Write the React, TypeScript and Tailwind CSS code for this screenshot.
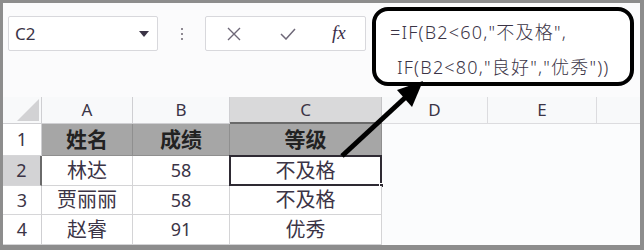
import React from 'react';

const ink = 'text-[#3b3446]';

const rows = [
  { n: '1', a: '姓名', b: '成绩', c: '等级', head: true },
  { n: '2', a: '林达', b: '58', c: '不及格' },
  { n: '3', a: '贾丽丽', b: '58', c: '不及格' },
  { n: '4', a: '赵睿', b: '91', c: '优秀' },
];

export default function App() {
  return (
    <div
      className="relative w-[644px] h-[250px] overflow-hidden bg-[#fbfbfc] border-[#8d8d8d] border-t-[3px] border-l-[3px] border-r-[4px] border-b-[5px]"
      style={{ fontFamily: '"Noto Sans", "Noto Sans CJK SC", sans-serif' }}
    >
      {/* Toolbar */}
      <div className="h-[94px] flex items-start pt-[13px] pl-[5px]">
        <div className="w-[150px] h-[35px] bg-white border border-[#d8d8dc] rounded-[2px] flex items-center justify-between pl-[6px] pr-[8px]">
          <span className={`text-[17px] ${ink}`}>C2</span>
          <svg width="10" height="6" viewBox="0 0 10 6">
            <path d="M0 0 L10 0 L5 6 Z" fill="#3b3446" />
          </svg>
        </div>
        <div className="w-[47px] h-[35px] flex flex-col items-center justify-center gap-[3px]">
          <span className="w-[2px] h-[2px] bg-[#6b6570] rounded-full" />
          <span className="w-[2px] h-[2px] bg-[#6b6570] rounded-full" />
          <span className="w-[2px] h-[2px] bg-[#6b6570] rounded-full" />
        </div>
        <div className="w-[161px] h-[35px] bg-white border border-[#d8d8dc] rounded-[2px] flex items-center pl-[21px]">
          <svg width="14" height="14" viewBox="0 0 14 14">
            <path d="M1 1 L13 13 M13 1 L1 13" stroke="#6e6878" strokeWidth="1.4" />
          </svg>
          <svg width="16" height="12" viewBox="0 0 16 12" className="ml-[39px]">
            <path d="M1 6 L6 11 L15 1" stroke="#6e6878" strokeWidth="1.5" fill="none" />
          </svg>
          <span
            className="ml-[36px] text-[19px] italic text-[#3b2f4a]"
            style={{ fontFamily: '"Liberation Serif", serif' }}
          >
            fx
          </span>
        </div>
      </div>

      {/* Grid */}
      <div className="grid grid-cols-[39px_91px_97px_152px_106px_109px_1fr] grid-rows-[27px_32px_30px_29px_30px] bg-white">
        {/* column headers */}
        <div className="relative bg-[#f8f9fa] border-b border-r border-[#cfcfd2]">
          <svg className="absolute right-[2px] bottom-[2px]" width="22" height="22" viewBox="0 0 22 22">
            <path d="M22 0 L22 22 L0 22 Z" fill="#d2d2d4" />
          </svg>
        </div>
        {['A', 'B'].map((l) => (
          <div key={l} className={`bg-[#f8f9fa] border-b border-r border-[#cfcfd2] flex items-center justify-center text-[17px] ${ink}`}>
            {l}
          </div>
        ))}
        <div className={`bg-[#d9d9da] border-b-2 border-b-[#6a6a6a] border-r border-r-[#c4c4c6] flex items-center justify-center text-[17px] ${ink}`}>
          C
        </div>
        {['D', 'E'].map((l) => (
          <div key={l} className={`bg-[#f8f9fa] border-b border-r border-[#dcdcdf] flex items-center justify-center text-[17px] ${ink}`}>
            {l}
          </div>
        ))}
        <div className="bg-[#f8f9fa] border-b border-[#dcdcdf]" />

        {rows.map((r) => (
          <React.Fragment key={r.n}>
            <div
              className={`flex items-center justify-center text-[18px] ${ink} border-b border-[#d6d6d8] ${
                r.n === '2' ? 'bg-[#d3d3d5] border-r-2 border-r-[#6a6a6a]' : 'bg-white border-r border-r-[#cfcfd2]'
              }`}
            >
              {r.n}
            </div>
            {[r.a, r.b].map((v, i) => (
              <div
                key={i}
                className={`flex items-center justify-center border-b border-r ${
                  r.head
                    ? 'bg-[#a6a6a6] border-[#8f8f8f] text-[21px] font-bold text-[#222]'
                    : `bg-white border-[#d4d4d6] ${/\d/.test(v) ? 'text-[18px]' : 'text-[20px]'} ${ink}`
                }`}
              >
                {v}
              </div>
            ))}
            <div
              className={`relative flex items-center justify-center border-b border-r ${
                r.head
                  ? 'bg-[#a6a6a6] border-[#8f8f8f] text-[21px] font-bold text-[#222]'
                  : `bg-white border-[#d4d4d6] text-[20px] ${ink}`
              }`}
            >
              {r.c}
              {r.n === '2' && (
                <>
                  <div className="absolute -left-px -top-px -right-px -bottom-px border-2 border-[#2e2a33]" />
                  <div className="absolute -right-[3px] -bottom-[3px] w-[5px] h-[5px] bg-[#2e2a33] border border-white" />
                </>
              )}
            </div>
            <div className="bg-[#fbfcfd]" />
            <div className="bg-[#fbfcfd]" />
            <div className="bg-[#fbfcfd]" />
          </React.Fragment>
        ))}
      </div>

      {/* Callout */}
      <div
        className={`absolute left-[369px] top-[4px] w-[262px] h-[79px] bg-white border-[4px] border-black rounded-[16px] pl-[14px] pt-[4px] text-[18px] font-light tracking-[1.2px] leading-[35px] whitespace-nowrap ${ink}`}
      >
        <div>=IF(B2&lt;60,"不及格",</div>
        <div className="pl-[7px]">IF(B2&lt;80,"良好","优秀"))</div>
      </div>

      {/* Arrow */}
      <svg className="absolute left-0 top-0" width="644" height="250" viewBox="3 3 644 250">
        <line x1="342" y1="156" x2="408" y2="95" stroke="black" strokeWidth="5" />
        <path d="M423 81 L412 107 L397 90 Z" fill="black" />
      </svg>
    </div>
  );
}
